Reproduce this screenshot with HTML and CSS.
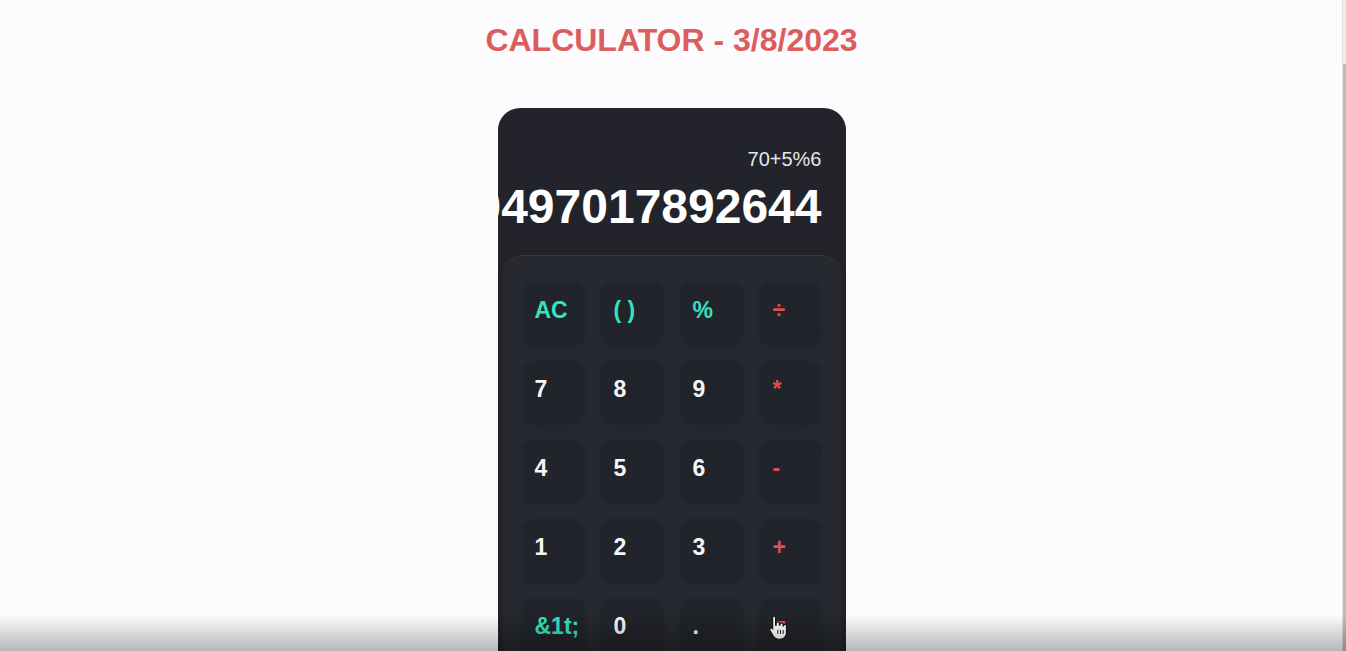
FILE: index.html
```html
<!DOCTYPE html>
<html lang="en">
<head>
<meta charset="utf-8">
<title>Calculator</title>
<link rel="stylesheet" href="styles.css">
</head>
<body>
<h1 class="title">CALCULATOR - 3/8/2023</h1>
<div class="calc">
  <div class="display">
    <div class="expr">70+5%6</div>
    <div class="result">70497017892644</div>
  </div>
  <div class="keypad">
    <div class="key fn">AC</div>
    <div class="key fn">( )</div>
    <div class="key fn">%</div>
    <div class="key op">÷</div>
    <div class="key">7</div>
    <div class="key">8</div>
    <div class="key">9</div>
    <div class="key op">*</div>
    <div class="key">4</div>
    <div class="key">5</div>
    <div class="key">6</div>
    <div class="key op">-</div>
    <div class="key">1</div>
    <div class="key">2</div>
    <div class="key">3</div>
    <div class="key op">+</div>
    <div class="key fn">&amp;1t;</div>
    <div class="key">0</div>
    <div class="key">.</div>
    <div class="key op eq">=
      <svg class="cursor" width="21" height="26" viewBox="0 0 18 22"><path d="M5 1.5c.9 0 1.5.6 1.5 1.5v6.5h.5V8c0-.8.6-1.4 1.4-1.4s1.4.6 1.4 1.4v1.5h.4V9c0-.8.6-1.4 1.4-1.4s1.4.6 1.4 1.4v1h.3c0-.7.6-1.2 1.3-1.2s1.3.6 1.3 1.3v5.4c0 3.5-2.3 6-5.6 6H9c-2 0-3.3-1-4.4-2.6L1.7 14c-.5-.7-.3-1.6.4-2 .6-.4 1.4-.3 1.9.3V3c0-.9.6-1.5 1.5-1.5z" fill="#fff" stroke="#111" stroke-width="1"/><path d="M8.4 13.5v3.5M10.7 13.5v3.5M13 13.5v3.5" stroke="#111" stroke-width=".8"/></svg>
    </div>
  </div>
</div>
<div class="scrollbar"></div>
<div class="shade"></div>
</body>
</html>
```

FILE: styles.css
```css
html {
  background: #fcfbfd;
}
body {
  margin: 0;
  padding-right: 3px;
  background: #fcfbfd;
  font-family: "Liberation Sans", Arial, sans-serif;
}
.title {
  margin: 22px 0 0;
  text-align: center;
  color: #dc5d5d;
  font-size: 32px;
  line-height: 36px;
  font-weight: bold;
}
.calc {
  width: 348px;
  margin: 50px auto 0;
  background: #22232b;
  border-radius: 22px;
  overflow: hidden;
  padding-bottom: 22px;
}
.display {
  height: 147px;
  box-sizing: border-box;
  padding: 40px 24px 0;
  display: flex;
  flex-direction: column;
  align-items: flex-end;
}
.expr {
  color: #e6e6e6;
  font-size: 20px;
  line-height: 23px;
}
.result {
  margin-top: 8px;
  color: #ffffff;
  font-size: 48px;
  line-height: 56px;
  font-weight: bold;
  white-space: nowrap;
}
.keypad {
  margin: 0 5px;
  background: #272931;
  border-top: 1px solid #4a2f38;
  border-radius: 20px 20px 0 0;
  padding-top: 26px;
  display: grid;
  grid-template-columns: repeat(4, 63px);
  grid-auto-rows: 63px;
  column-gap: 16px;
  row-gap: 16px;
  justify-content: center;
  box-shadow: 0 -3px 8px rgba(60, 20, 30, 0.25);
}
.key {
  position: relative;
  background: #22242b;
  border-radius: 14px;
  box-shadow: 0 2px 6px rgba(0, 0, 0, 0.12);
  box-sizing: border-box;
  padding: 17px 0 0 13px;
  color: #f6f6f6;
  font-size: 23px;
  line-height: 23px;
  font-weight: bold;
}
.key.fn {
  color: #36e2bf;
}
.key.op {
  color: #dc4f55;
  padding-left: 14px;
}
.cursor {
  position: absolute;
  left: 9px;
  top: 16px;
}
.scrollbar {
  position: fixed;
  top: 0;
  right: 0;
  width: 4px;
  height: 100%;
  background: linear-gradient(to bottom, #efefef 0, #efefef 64px, #bcbcbc 64px, #bcbcbc 100%);
  border-left: 1px solid #e2e2e2;
  box-sizing: border-box;
}
.shade {
  position: fixed;
  left: 0;
  right: 0;
  bottom: 0;
  height: 36px;
  background: linear-gradient(to bottom, rgba(0, 0, 0, 0), rgba(0, 0, 0, 0.27));
  pointer-events: none;
}
```
